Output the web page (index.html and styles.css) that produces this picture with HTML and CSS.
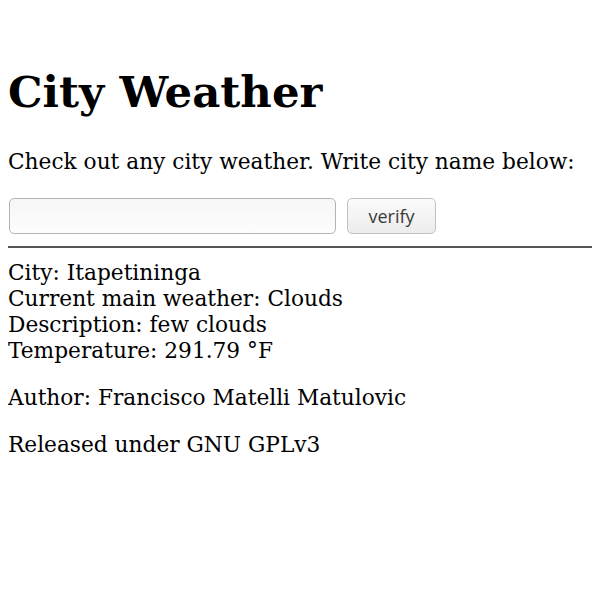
FILE: index.html
```html
<!DOCTYPE html>
<html>
<head>
<meta charset="utf-8">
<title>City Weather</title>
<link rel="stylesheet" href="styles.css">
</head>
<body>
<h1 class="title">City Weather</h1>
<p class="intro">Check out any city weather. Write city name below:</p>
<form class="search">
  <input class="city-input" type="text">
  <button class="verify" type="button">verify</button>
</form>
<div class="rule"></div>
<div class="result">
  <div>City: Itapetininga</div>
  <div>Current main weather: Clouds</div>
  <div>Description: few clouds</div>
  <div>Temperature: 291.79 °F</div>
</div>
<p class="note author">Author: Francisco Matelli Matulovic</p>
<p class="note license">Released under GNU GPLv3</p>
</body>
</html>
```
FILE: styles.css
```css
body {
  margin: 8px;
  font-family: "DejaVu Serif", serif;
  font-size: 21.7px;
  line-height: 26px;
  color: #000;
  background: #fff;
}
.title {
  font-size: 43.4px;
  line-height: 52px;
  margin: 58px 0 31px;
}
.intro {
  margin: 0 0 23px;
}
.search {
  display: flex;
  gap: 11px;
  align-items: center;
}
.city-input {
  width: 327px;
  height: 36px;
  box-sizing: border-box;
  border: 1px solid #b4b4b4;
  border-radius: 5px;
  background: linear-gradient(#f6f6f6, #fdfdfd);
  margin: 0 0 0 1px;
}
.verify {
  width: 89px;
  height: 36px;
  box-sizing: border-box;
  border: 1px solid #c0c0c0;
  border-radius: 5px;
  background: linear-gradient(#fbfbfb, #ececec);
  font-family: "Open Sans", sans-serif;
  font-size: 18px;
  color: #3a3a3a;
}
.rule {
  height: 2px;
  background: #555;
  margin: 12px -4px 12px 0;
}
.result {
  margin: 0;
}
.author {
  margin: 21px 0 0;
}
.license {
  margin: 21px 0 0;
}
```
